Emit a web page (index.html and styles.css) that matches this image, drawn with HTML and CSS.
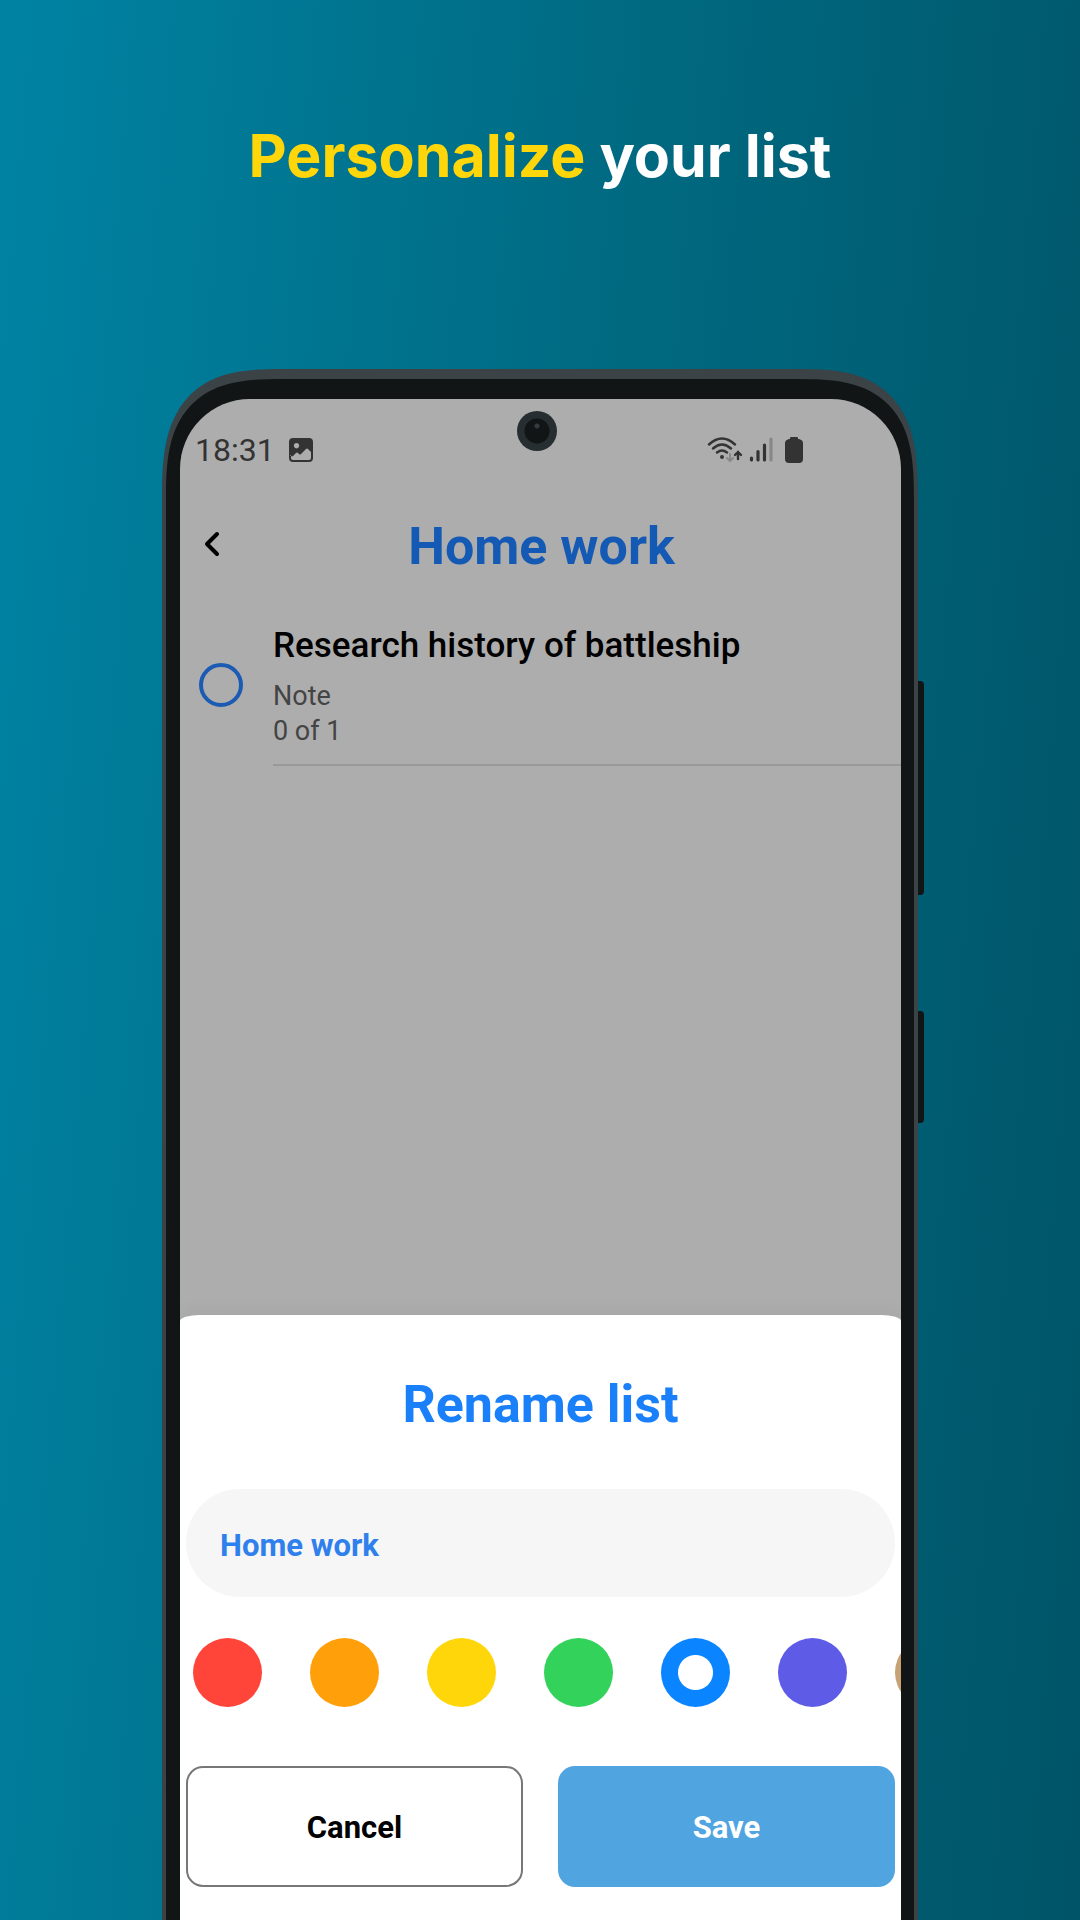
FILE: index.html
```html
<!DOCTYPE html>
<html lang="en">
<head>
  <meta charset="utf-8">
  <meta name="viewport" content="width=device-width, initial-scale=1">
  <title>Personalize your list</title>
  <link rel="stylesheet" href="styles.css">
</head>
<body>
  <h1 class="headline"><span class="headline-accent">Personalize</span> your list</h1>

  <div class="phone">
    <span class="side-key side-key-volume"></span>
    <span class="side-key side-key-power"></span>
    <div class="bezel">
      <div class="screen">
        <span class="camera"></span>

        <div class="status-bar">
          <div class="status-group">
            <span class="clock">18:31</span>
            <svg class="status-icon" width="24" height="24" viewBox="0 0 24 24" aria-hidden="true">
              <path fill="#333" fill-rule="evenodd" d="M4 0h16a4 4 0 0 1 4 4v16a4 4 0 0 1-4 4H4a4 4 0 0 1-4-4V4a4 4 0 0 1 4-4zM2 17v3q0 2 2 2h16q2 0 2-2v-6l-3-3q-1-1-2 0l-5 5q-1 1-2 0l-1-1q-1-1-2 0l-3 3q-2 1-3-1zM7.500 5a2.700 2.700 0 1 0 .01 0z"/>
            </svg>
          </div>
          <div class="status-group status-group-end">
            <svg width="36" height="28" viewBox="0 0 36 28" fill="none" stroke-linecap="round" aria-hidden="true">
              <path stroke="#333" stroke-width="2.400" d="M2 8.500Q15-3.500 28 8.500M6 12.500q9-8 18 0M10 16.500q5-4 10 0"/>
              <circle cx="15" cy="21" r="2" fill="#333"/>
              <path stroke="#888" stroke-width="2" d="M23 18v7m-3-3 3 3 3-3"/>
              <path stroke="#333" stroke-width="2.400" d="M31 23v-7m-3 3 3-3 3 3"/>
            </svg>
            <svg width="24" height="28" viewBox="0 0 24 28" stroke-width="3.200" stroke-linecap="round" aria-hidden="true">
              <path stroke="#333" d="M2.500 22v2M9 15.500V24M15.500 9v15"/>
              <path stroke="#888" d="M22 3v21"/>
            </svg>
            <svg class="battery" width="18" height="28" viewBox="0 0 18 28" aria-hidden="true">
              <path fill="#333" d="M5 3V2q0-1 1-1h6q1 0 1 1v1h1q4 1 4 4v16q0 4-4 4H4q-4 0-4-4V7q0-3 4-4z"/>
            </svg>
          </div>
        </div>

        <header class="app-bar">
          <button class="back" type="button" aria-label="Back">
            <svg width="18" height="28" viewBox="0 0 18 28" fill="none" stroke="#000" stroke-width="4" stroke-linecap="round" stroke-linejoin="round" aria-hidden="true">
              <path d="M14 3 4 13l10 10"/>
            </svg>
          </button>
          <h2 class="app-title">Home work</h2>
        </header>

        <main class="tasks">
          <div class="task">
            <input class="task-check" type="checkbox" id="task-1">
            <div class="task-body">
              <label class="task-name" for="task-1">Research history of battleship</label>
              <p class="task-meta">Note</p>
              <p class="task-meta">0 of 1</p>
            </div>
          </div>
        </main>

        <form class="sheet">
          <h2 class="sheet-title">Rename list</h2>
          <input class="name-field" type="text" value="Home work" aria-label="List name">
          <div class="swatches" role="radiogroup" aria-label="List color">
            <input class="swatch swatch-red" type="radio" name="color" aria-label="Red">
            <input class="swatch swatch-orange" type="radio" name="color" aria-label="Orange">
            <input class="swatch swatch-yellow" type="radio" name="color" aria-label="Yellow">
            <input class="swatch swatch-green" type="radio" name="color" aria-label="Green">
            <input class="swatch swatch-blue" type="radio" name="color" aria-label="Blue" checked>
            <input class="swatch swatch-indigo" type="radio" name="color" aria-label="Indigo">
            <input class="swatch swatch-brown" type="radio" name="color" aria-label="Brown">
          </div>
          <div class="actions">
            <button class="action action-cancel" type="button">Cancel</button>
            <button class="action action-save" type="button">Save</button>
          </div>
        </form>
      </div>
    </div>
  </div>
</body>
</html>
```

FILE: styles.css
```css
* {
  box-sizing: border-box;
  margin: 0;
}

body {
  display: flex;
  flex-direction: column;
  min-height: 100vh;
  background: linear-gradient(95deg, #0083a3 0%, #00687f 55%, #005467 100%);
  font-family: Roboto, "Liberation Sans", sans-serif;
  color: #000;
}

.headline {
  padding: 116px 24px 173px;
  font: 700 59px/80px Inter, "Liberation Sans", sans-serif;
  text-align: center;
  color: #fff;
}

.headline-accent {
  color: #ffd60a;
}

/* Phone frame */

.phone {
  position: relative;
  display: flex;
  flex: 1;
  width: 70%;
  margin: 0 auto;
  padding: 10px 4px 0;
  border-radius: 90px 90px 0 0 / 100px 100px 0 0;
  background: #3b4346;
}

.bezel {
  display: flex;
  flex: 1;
  min-width: 0;
  padding: 20px 13px 0 14px;
  border-radius: 86px 86px 0 0 / 94px 94px 0 0;
  background: #111516;
}

@supports (corner-shape: superellipse(1.5)) {
  .phone {
    border-radius: 120px 120px 0 0 / 130px 130px 0 0;
    corner-shape: superellipse(1.5);
  }

  .bezel {
    border-radius: 116px 116px 0 0 / 120px 120px 0 0;
    corner-shape: superellipse(1.5);
  }
}

.side-key {
  position: absolute;
  left: 100%;
  width: 6px;
  border-radius: 0 4px 4px 0;
  background: #111516;
}

.side-key-volume {
  top: 312px;
  height: 214px;
}

.side-key-power {
  top: 642px;
  height: 112px;
}

.screen {
  position: relative;
  display: flex;
  flex: 1;
  flex-direction: column;
  min-width: 0;
  overflow: hidden;
  border-radius: 70px 70px 0 0;
  background: #adadad;
}

.camera {
  position: absolute;
  top: 12px;
  left: calc(50% - 24px);
  width: 40px;
  height: 40px;
  border-radius: 50%;
  background: radial-gradient(circle at 20px 15px, #333b3e 2px, transparent 3px),
    radial-gradient(circle, #111516 12px, #262e31 13px);
}

/* Status bar */

.status-bar {
  display: flex;
  justify-content: space-between;
  padding: 31px 98px 0 15px;
}

.status-group {
  display: flex;
  align-items: center;
  gap: 14px;
  height: 40px;
}

.status-group-end {
  gap: 6px;
}

.battery {
  margin-left: 6px;
}

.clock {
  font-size: 32px;
  line-height: 40px;
  color: #333;
}

/* App bar */

.app-bar {
  display: grid;
  grid-template-columns: 64px 1fr 62px;
  align-items: center;
  height: 80px;
  margin-top: 35px;
}

.back {
  display: flex;
  justify-content: center;
  padding: 0;
  border: 0;
  background: none;
}

.app-title {
  padding-top: 4px;
  font-size: 52px;
  line-height: 60px;
  font-weight: 700;
  text-align: center;
  color: #1459b3;
}

/* Task list */

.tasks {
  flex: 1;
}

.task {
  display: flex;
  align-items: center;
  gap: 30px;
  padding: 18px 0 0 19px;
}

.task-check {
  flex: none;
  width: 44px;
  height: 44px;
  margin: 0;
  appearance: none;
  border: 4px solid #1c5bb4;
  border-radius: 50%;
}

.task-body {
  flex: 1;
  padding: 21px 0 15px;
  border-bottom: 2px solid #999;
}

.task-name {
  display: block;
  margin-bottom: 11px;
  font-size: 35px;
  line-height: 44px;
  font-weight: 500;
}

.task-meta {
  font-size: 27px;
  line-height: 35px;
  color: #444;
}

/* Rename sheet */

.sheet {
  padding: 60px 6px 33px;
  border-radius: 20px 20px 0 0 / 6px 6px 0 0;
  background: #fff;
  box-shadow: 0 -4px 20px rgba(0, 0, 0, 0.04);
}

.sheet-title {
  font-size: 52px;
  line-height: 60px;
  font-weight: 700;
  text-align: center;
  color: #1a80fa;
}

.name-field {
  display: block;
  width: 100%;
  height: 108px;
  margin-top: 54px;
  padding: 4px 34px 0;
  border: 0;
  border-radius: 54px;
  background: #f6f6f6;
  font: 700 31px/40px Roboto, "Liberation Sans", sans-serif;
  color: #2f80ed;
}

.swatches {
  display: flex;
  gap: 48px;
  margin: 41px -6px 0;
  padding-left: 13px;
  overflow: hidden;
}

.swatch {
  flex: none;
  width: 69px;
  height: 69px;
  margin: 0;
  appearance: none;
  border-radius: 50%;
}

.swatch-red { background: #ff453a; }
.swatch-orange { background: #ff9f0a; }
.swatch-yellow { background: #ffd60a; }
.swatch-green { background: #32d25b; }
.swatch-blue { background: #0a84ff; }
.swatch-indigo { background: #5e5ce6; }
.swatch-brown { background: #c6a274; }

.swatch:checked {
  background-image: radial-gradient(circle, #fff 17px, transparent 18px);
}

.actions {
  display: grid;
  grid-template-columns: 1fr 1fr;
  gap: 35px;
  margin-top: 59px;
}

.action {
  height: 121px;
  padding: 2px 0 0;
  border: 0;
  border-radius: 17px;
  font: 700 31px/40px Roboto, "Liberation Sans", sans-serif;
}

.action-cancel {
  border: 2px solid #777;
  background: #fff;
  color: #000;
}

.action-save {
  background: #50a4e0;
  color: #fff;
}
```
